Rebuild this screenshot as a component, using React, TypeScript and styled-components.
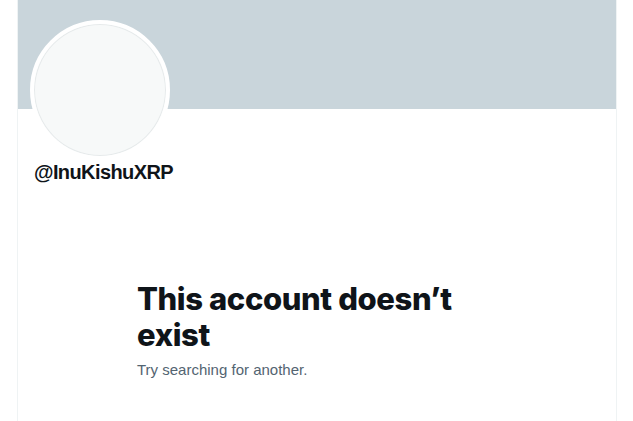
import React from "react";
import styled, { createGlobalStyle } from "styled-components";

const Global = createGlobalStyle`
  html, body { margin: 0; padding: 0; background: #ffffff; }
  body { font-family: "Liberation Sans", Arial, sans-serif; }
`;

const Page = styled.div`
  display: flex;
  padding-left: 17px;
  min-height: 421px;
`;

const Column = styled.main`
  width: 598px;
  min-height: 421px;
  border-left: 1px solid #eff3f4;
  border-right: 1px solid #eff3f4;
  display: flex;
  flex-direction: column;
`;

const Banner = styled.div`
  height: 109px;
  background: #c9d5db;
`;

const ProfileHead = styled.div`
  padding: 0 12px;
  margin-top: -89px;
  display: flex;
  flex-direction: column;
  align-items: flex-start;
`;

const Avatar = styled.div`
  width: 132px;
  height: 132px;
  border-radius: 50%;
  border: 4px solid #ffffff;
  background: #f7f9f9;
  box-shadow: inset 0 0 0 1px #e6eaeb;
`;

const Handle = styled.div`
  padding-left: 4px;
  font-size: 20px;
  line-height: 24px;
  font-weight: 700;
  color: #0f1419;
  letter-spacing: -0.6px;
`;

const Empty = styled.section`
  width: 360px;
  margin: 97px 0 0 119px;
  display: flex;
  flex-direction: column;
`;

const Title = styled.h1`
  margin: 0;
  font-family: Inter, "Liberation Sans", sans-serif;
  font-size: 31px;
  line-height: 36px;
  font-weight: 800;
  color: #0f1419;
  letter-spacing: -0.4px;
`;

const Sub = styled.p`
  margin: 7px 0 0;
  font-size: 15px;
  line-height: 20px;
  color: #536471;
`;

export default function App() {
  return (
    <>
      <Global />
      <Page>
        <Column>
          <Banner />
          <ProfileHead>
            <Avatar />
            <Handle>@InuKishuXRP</Handle>
          </ProfileHead>
          <Empty>
            <Title>This account doesn’t exist</Title>
            <Sub>Try searching for another.</Sub>
          </Empty>
        </Column>
      </Page>
    </>
  );
}
